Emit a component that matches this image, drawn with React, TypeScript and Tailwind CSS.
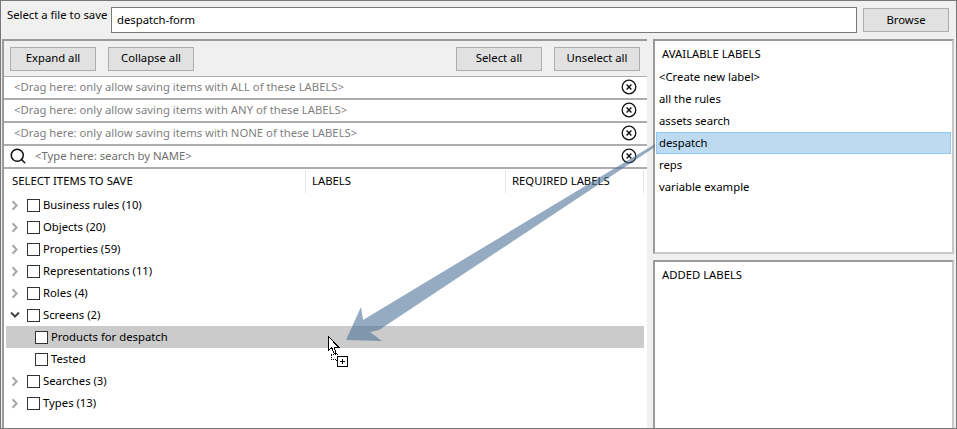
import { Search } from "lucide-react";

const filters = [
  "<Drag here: only allow saving items with ALL of these LABELS>",
  "<Drag here: only allow saving items with ANY of these LABELS>",
  "<Drag here: only allow saving items with NONE of these LABELS>",
];

const availableLabels = ["all the rules", "assets search", "despatch", "reps", "variable example"];

function ToolButton({ label, className }: { label: string; className: string }) {
  return (
    <button className={`flex h-[24px] items-center justify-center border border-[#adadad] bg-[#e1e1e1] text-black ${className}`}>
      {label}
    </button>
  );
}

function ClearIcon() {
  return (
    <svg width="16" height="16" viewBox="0 0 16 16" fill="none" stroke="#111" className="-mt-[1px] shrink-0">
      <circle cx="8" cy="8" r="6.8" strokeWidth="1.3" />
      <path d="M5.6 5.6l4.8 4.8M10.4 5.6l-4.8 4.8" strokeWidth="1.4" />
    </svg>
  );
}

function Checkbox() {
  return <span className="h-[13px] w-[13px] shrink-0 border border-[#333] bg-white" />;
}

function Chevron({ open }: { open?: boolean }) {
  return (
    <span className="flex w-[16px] shrink-0">
      {open ? (
        <svg width="11" height="8" viewBox="0 0 11 8" fill="none" stroke="#444" strokeWidth="2" className="-ml-[1px]">
          <path d="M1 1.5l4 4 4-4" />
        </svg>
      ) : (
        <svg width="8" height="11" viewBox="0 0 8 11" fill="none" stroke="#a6a6a6" strokeWidth="2">
          <path d="M1.6 1.2l4 4.3-4 4.3" />
        </svg>
      )}
    </span>
  );
}

function TopItem({ label, open }: { label: string; open?: boolean }) {
  return (
    <div className="flex h-[22px] items-center pl-[7px]">
      <Chevron open={open} />
      <Checkbox />
      <span className="ml-[3px]">{label}</span>
    </div>
  );
}

function ChildItem({ label, active }: { label: string; active?: boolean }) {
  return (
    <div className={`ml-[2px] mr-[3px] flex h-[22px] items-center pl-[29px] ${active ? "bg-[#cbcbcb]" : ""}`}>
      <Checkbox />
      <span className="ml-[3px]">{label}</span>
    </div>
  );
}

export default function App() {
  return (
    <div className="relative h-[429px] w-[957px] overflow-hidden border border-[#777] bg-[#f0f0f0] font-['Noto_Sans',sans-serif] text-[11.3px] text-black">
      <div className="flex h-[38px] items-start pl-[6px] pr-[7px] pt-[6px]">
        <span className="w-[104px] whitespace-nowrap">Select a file to save</span>
        <div className="flex h-[26px] flex-1 items-center border border-[#7a7a7a] bg-white pl-[5px]">despatch-form</div>
        <ToolButton label="Browse" className="ml-[6px] mt-[1px] w-[86px]" />
      </div>

      <div className="flex">
        <div className="ml-[1px] h-[391px] w-[645px] border-l-2 border-t-2 border-[#9a9a9a] bg-[#f0f0f0]">
          <div className="flex h-[35px] items-center px-[6px]">
            <ToolButton label="Expand all" className="w-[86px]" />
            <ToolButton label="Collapse all" className="ml-[12px] w-[86px]" />
            <ToolButton label="Select all" className="ml-auto w-[86px]" />
            <ToolButton label="Unselect all" className="ml-[12px] mr-[1px] w-[86px]" />
          </div>
          <div className="flex flex-col gap-[2px] bg-[#adadad] pb-[2px] pt-[1px]">
            {filters.map((text) => (
              <div key={text} className="flex h-[21px] items-center justify-between bg-white pl-[10px] pr-[10px] text-[#7f7f7f]">
                <span>{text}</span>
                <ClearIcon />
              </div>
            ))}
            <div className="flex h-[21px] items-center bg-white pl-[5px] pr-[10px] text-[#6f6f6f]">
              <Search size={18} strokeWidth={2} className="-mt-[2px] text-[#111]" />
              <span className="ml-[8px] flex-1">{"<Type here: search by NAME>"}</span>
              <ClearIcon />
            </div>
          </div>
          <div className="h-[260px] bg-white">
            <div className="flex h-[25px] items-center">
              <div className="flex h-[22px] w-[302px] items-center border-r border-[#e5e5e5] pl-[8px]">SELECT ITEMS TO SAVE</div>
              <div className="flex h-[22px] w-[200px] items-center border-r border-[#e5e5e5] pl-[6px]">LABELS</div>
              <div className="flex h-[22px] w-[138px] items-center border-r border-[#e5e5e5] pl-[6px]">REQUIRED LABELS</div>
            </div>
            <TopItem label="Business rules (10)" />
            <TopItem label="Objects (20)" />
            <TopItem label="Properties (59)" />
            <TopItem label="Representations (11)" />
            <TopItem label="Roles (4)" />
            <TopItem label="Screens (2)" open />
            <ChildItem label="Products for despatch" active />
            <ChildItem label="Tested" />
            <TopItem label="Searches (3)" />
            <TopItem label="Types (13)" />
          </div>
        </div>

        <div className="ml-[6px] flex w-[301px] flex-col gap-[6px]">
          <div className="h-[215px] border-2 border-[#9a9a9a] border-r-[#c8c8c8] border-b-[#c8c8c8] bg-white">
            <div className="flex h-[25px] items-center pl-[7px] pt-[2px]">AVAILABLE LABELS</div>
            <div className="flex h-[22px] items-center pl-[4px]">{"<Create new label>"}</div>
            {availableLabels.map((label) => (
              <div
                key={label}
                className={`flex h-[22px] items-center ${label === "despatch" ? "ml-[1px] mr-[1px] border border-[#90c8f6] bg-[#bcdaf2] pl-[2px]" : "pl-[4px]"}`}
              >
                {label}
              </div>
            ))}
          </div>
          <div className="h-[170px] border-2 border-[#9a9a9a] border-r-[#c8c8c8] border-b-0 bg-white">
            <div className="flex h-[25px] items-center pl-[7px] pt-[2px]">ADDED LABELS</div>
          </div>
        </div>
      </div>

      {/* drag arrow over the tree */}
      <svg className="absolute left-[-1px] top-[-1px]" width="957" height="429" viewBox="0 0 957 429">
        <path d="M655 144 L363 320 L361 307 L346 340 L382 341 L370 332 L379 330 L655 147 Z" fill="#4f7398" fillOpacity="0.6" />
      </svg>

      {/* drag cursor */}
      <svg className="absolute left-[326px] top-[334px]" width="24" height="34" viewBox="0 0 24 34" shapeRendering="crispEdges">
        <path d="M1.5 1.5V15.5L4.5 12.5L7 18H9L7 12H11.5Z" fill="#fff" stroke="#000" />
        <path d="M5.5 19.5H10.5V22.5H13.5V26.5H9.5V24.5H4.5V20Z" fill="#fff" stroke="#000" strokeDasharray="1 1" />
        <rect x="10.5" y="21.5" width="10" height="10" fill="#fff" stroke="#000" />
        <path d="M13 26.5H18M15.5 24V29" stroke="#000" />
      </svg>
    </div>
  );
}
